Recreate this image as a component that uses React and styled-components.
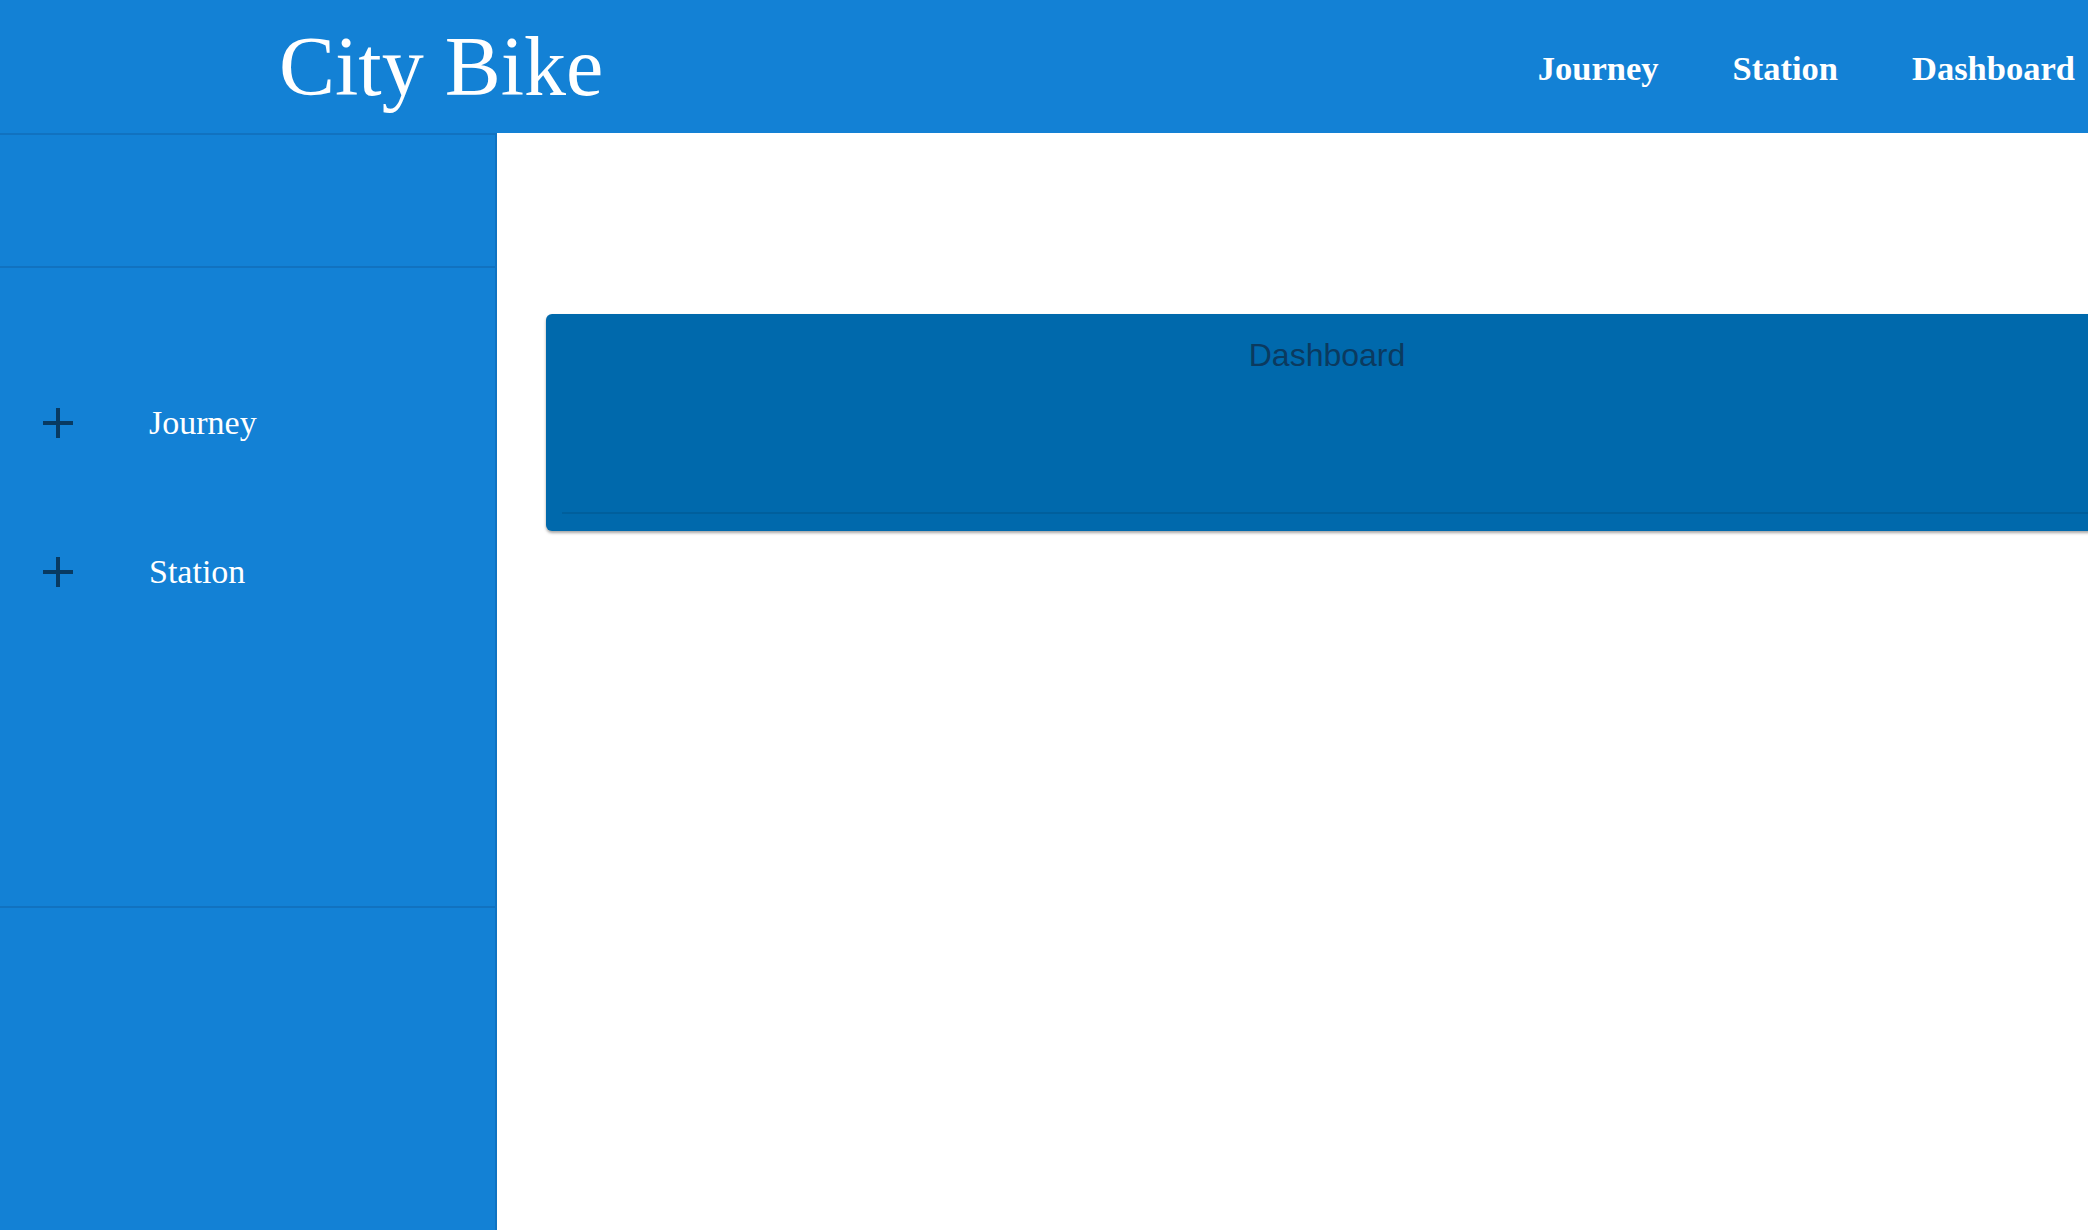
import React from "react";
import styled, { createGlobalStyle } from "styled-components";

const GlobalStyle = createGlobalStyle`
  html, body {
    margin: 0;
    padding: 0;
    overflow: hidden;
    background: #ffffff;
  }
  * {
    box-sizing: border-box;
  }
`;

const Page = styled.div`
  width: 2088px;
  height: 1230px;
  display: flex;
  flex-direction: column;
  overflow: hidden;
`;

const Header = styled.header`
  height: 133px;
  flex-shrink: 0;
  background: #1381d5;
  display: flex;
  align-items: center;
  justify-content: space-between;
  padding: 0 13px 0 279px;
`;

const Brand = styled.h1`
  margin: 0;
  font-family: "Liberation Serif", "Times New Roman", serif;
  font-weight: 400;
  font-size: 84px;
  line-height: 1;
  color: #ffffff;
  position: relative;
  top: 0px;
`;

const Nav = styled.nav`
  display: flex;
  gap: 74px;
  position: relative;
  top: 2px;
`;

const NavLink = styled.a`
  font-family: "Liberation Serif", "Times New Roman", serif;
  font-weight: 700;
  font-size: 34.5px;
  color: #ffffff;
  text-decoration: none;
  cursor: pointer;
`;

const Body = styled.div`
  flex: 1;
  display: flex;
  min-height: 0;
`;

const Sidebar = styled.aside`
  width: 497px;
  flex-shrink: 0;
  background: #1381d5;
  border-right: 2px solid #0f73c2;
  display: flex;
  flex-direction: column;
`;

const SideBlock = styled.div`
  height: ${(p) => p.h}px;
  flex-shrink: 0;
  border-top: ${(p) => (p.top ? "2px solid #1172c0" : "none")};
  border-bottom: 2px solid #1172c0;
`;

const Menu = styled.ul`
  list-style: none;
  margin: 0;
  padding: 125px 0 0 0;
  height: 506px;
  display: flex;
  flex-direction: column;
  gap: 89px;
`;

const MenuItem = styled.li`
  height: 60px;
  display: flex;
  align-items: center;
  padding-left: 43px;
  gap: 76px;
  font-family: "Liberation Serif", "Times New Roman", serif;
  font-size: 34px;
  color: #ffffff;
  cursor: pointer;
`;

const Main = styled.main`
  flex: 1;
  overflow: hidden;
  padding: 181px 0 0 49px;
`;

const Card = styled.section`
  width: 1562px;
  height: 217px;
  background: #0069ac;
  border-radius: 6px;
  box-shadow: 0 2px 3px rgba(0, 0, 0, 0.35);
  padding: 23px 0 0 16px;
  display: flex;
  flex-direction: column;
`;

const CardTitle = styled.h2`
  margin: 0;
  padding-right: 16px;
  text-align: center;
  font-family: "Liberation Sans", Arial, sans-serif;
  font-weight: 400;
  font-size: 32px;
  color: #0b3a5f;
`;

const CardBody = styled.div`
  flex: 1;
  border-bottom: 2px solid #005f9c;
  margin-bottom: 17px;
`;

const PlusIcon = () => (
  <svg width="30" height="30" viewBox="0 0 30 30" aria-hidden="true">
    <rect x="13" y="0" width="4" height="30" fill="#083a62" />
    <rect x="0" y="13" width="30" height="4" fill="#083a62" />
  </svg>
);

const menuItems = ["Journey", "Station"];

export default function App() {
  return (
    <Page>
      <GlobalStyle />
      <Header>
        <Brand>City Bike</Brand>
        <Nav>
          <NavLink>Journey</NavLink>
          <NavLink>Station</NavLink>
          <NavLink>Dashboard</NavLink>
        </Nav>
      </Header>
      <Body>
        <Sidebar>
          <SideBlock h={135} top />
          <Menu>
            {menuItems.map((item) => (
              <MenuItem key={item}>
                <PlusIcon />
                <span>{item}</span>
              </MenuItem>
            ))}
          </Menu>
          <SideBlock h={134} />
        </Sidebar>
        <Main>
          <Card>
            <CardTitle>Dashboard</CardTitle>
            <CardBody />
          </Card>
        </Main>
      </Body>
    </Page>
  );
}
